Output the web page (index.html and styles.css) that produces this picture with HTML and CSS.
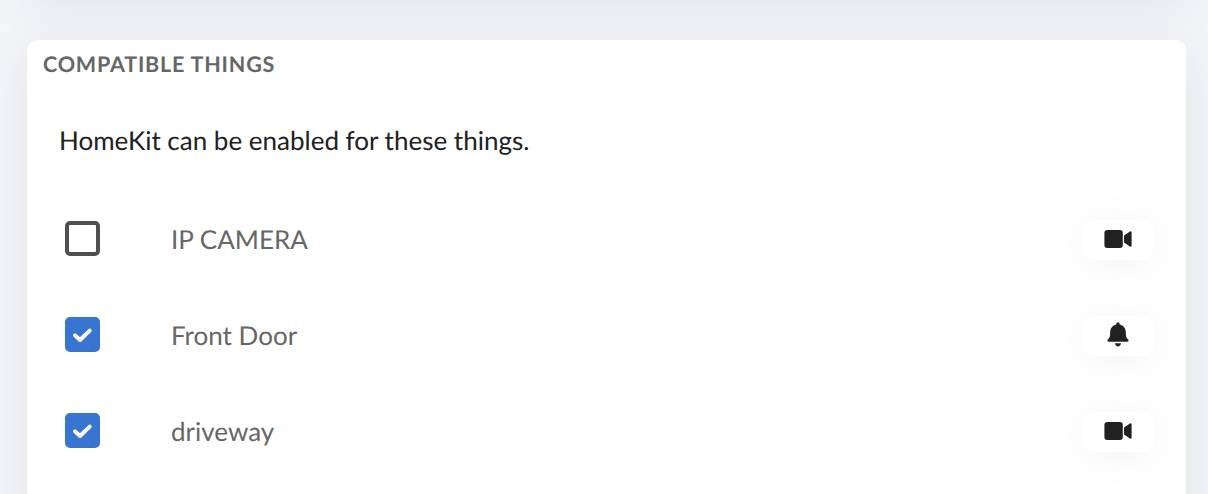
FILE: index.html
```html
<!DOCTYPE html>
<html lang="en">
<head>
<meta charset="utf-8">
<title>HomeKit</title>
<link rel="stylesheet" href="styles.css">
</head>
<body>
<div class="page">
  <div class="card previous"></div>
  <section class="card things">
    <h2 class="title">COMPATIBLE THINGS</h2>
    <p class="intro">HomeKit can be enabled for these things.</p>
    <div class="row">
      <span class="checkbox"></span>
      <span class="name">IP CAMERA</span>
      <span class="chip"><svg width="28" height="18" viewBox="0 0 28 18"><rect x="0.4" y="0" width="18.4" height="18" rx="3"/><path d="M20 5.6 L25.6 1.8 Q27.6 0.6 27.6 2.6 V15.4 Q27.6 17.4 25.6 16.2 L20 12.5Z"/></svg></span>
    </div>
    <div class="row">
      <span class="checkbox checked"><svg width="21" height="16" viewBox="0 0 21 16"><path d="M3 8.4 L8 13 L17.7 3.6"/></svg></span>
      <span class="name">Front Door</span>
      <span class="chip"><svg width="22" height="25" viewBox="0 0 22 25"><path d="M11 0.3C12.1 0.3 12.7 1 12.7 2.4C16.4 3.2 18.8 6.1 18.8 10C18.8 14.8 19.7 16.3 21.2 17.6C22 18.7 21.5 19.8 20.2 19.8H1.8C0.5 19.8 0 18.7 0.8 17.6C2.3 16.3 3.2 14.8 3.2 10C3.2 6.1 5.6 3.2 9.3 2.4C9.3 1 9.9 0.3 11 0.3ZM8 21.3H14C13.8 23.4 12.5 24.4 11 24.4S8.2 23.4 8 21.3Z"/></svg></span>
    </div>
    <div class="row">
      <span class="checkbox checked"><svg width="21" height="16" viewBox="0 0 21 16"><path d="M3 8.4 L8 13 L17.7 3.6"/></svg></span>
      <span class="name">driveway</span>
      <span class="chip"><svg width="28" height="18" viewBox="0 0 28 18"><rect x="0.4" y="0" width="18.4" height="18" rx="3"/><path d="M20 5.6 L25.6 1.8 Q27.6 0.6 27.6 2.6 V15.4 Q27.6 17.4 25.6 16.2 L20 12.5Z"/></svg></span>
    </div>
  </section>
</div>
</body>
</html>
```
FILE: styles.css
```css
* { box-sizing: border-box; }
body {
  margin: 0;
  background: #f4f5f9;
  font-family: Lato, "Liberation Sans", sans-serif;
  color: #212121;
  text-rendering: geometricPrecision;
}
.page {
  height: 494px;
  padding: 0 22px 0 27px;
  overflow: hidden;
}
.card {
  background: #fff;
  border-radius: 10px;
  box-shadow: 0 8px 48px rgba(34, 41, 47, 0.08);
}
.previous {
  height: 200px;
  margin-top: -200px;
}
.things {
  position: relative;
  height: 560px;
  margin-top: 40px;
  padding: 9px 32px 0 38px;
}
.title {
  margin: 0 0 0 -22px;
  height: 32px;
  font-size: 21.5px;
  line-height: 30px;
  font-weight: 700;
  letter-spacing: 0.8px;
  color: #666;
  white-space: nowrap;
}
.intro {
  margin: 39px 0 0 -6px;
  height: 40px;
  font-size: 26px;
  line-height: 40px;
  white-space: nowrap;
}
.row {
  display: flex;
  align-items: center;
  height: 96px;
}
.intro + .row { margin-top: 31px; }
.checkbox {
  display: flex;
  align-items: center;
  justify-content: center;
  width: 35px;
  height: 35px;
  margin-bottom: 1px;
  border: 4px solid #505050;
  border-radius: 5px;
}
.checked {
  border-color: #3875d0;
  background: #3875d0;
}
.checkbox svg {
  flex: none;
  fill: none;
  stroke: #fff;
  stroke-width: 4;
  stroke-linecap: round;
  stroke-linejoin: round;
}
.name {
  flex: 1;
  margin-left: 71px;
  font-size: 26px;
  line-height: 40px;
  color: #666;
}
.chip {
  display: flex;
  align-items: center;
  justify-content: center;
  width: 72px;
  height: 40px;
  margin-top: 1px;
  padding-bottom: 2px;
  border-radius: 12px;
  background: #fff;
  box-shadow: 0 4px 40px rgba(0, 0, 0, 0.05);
  fill: #212121;
}
```
